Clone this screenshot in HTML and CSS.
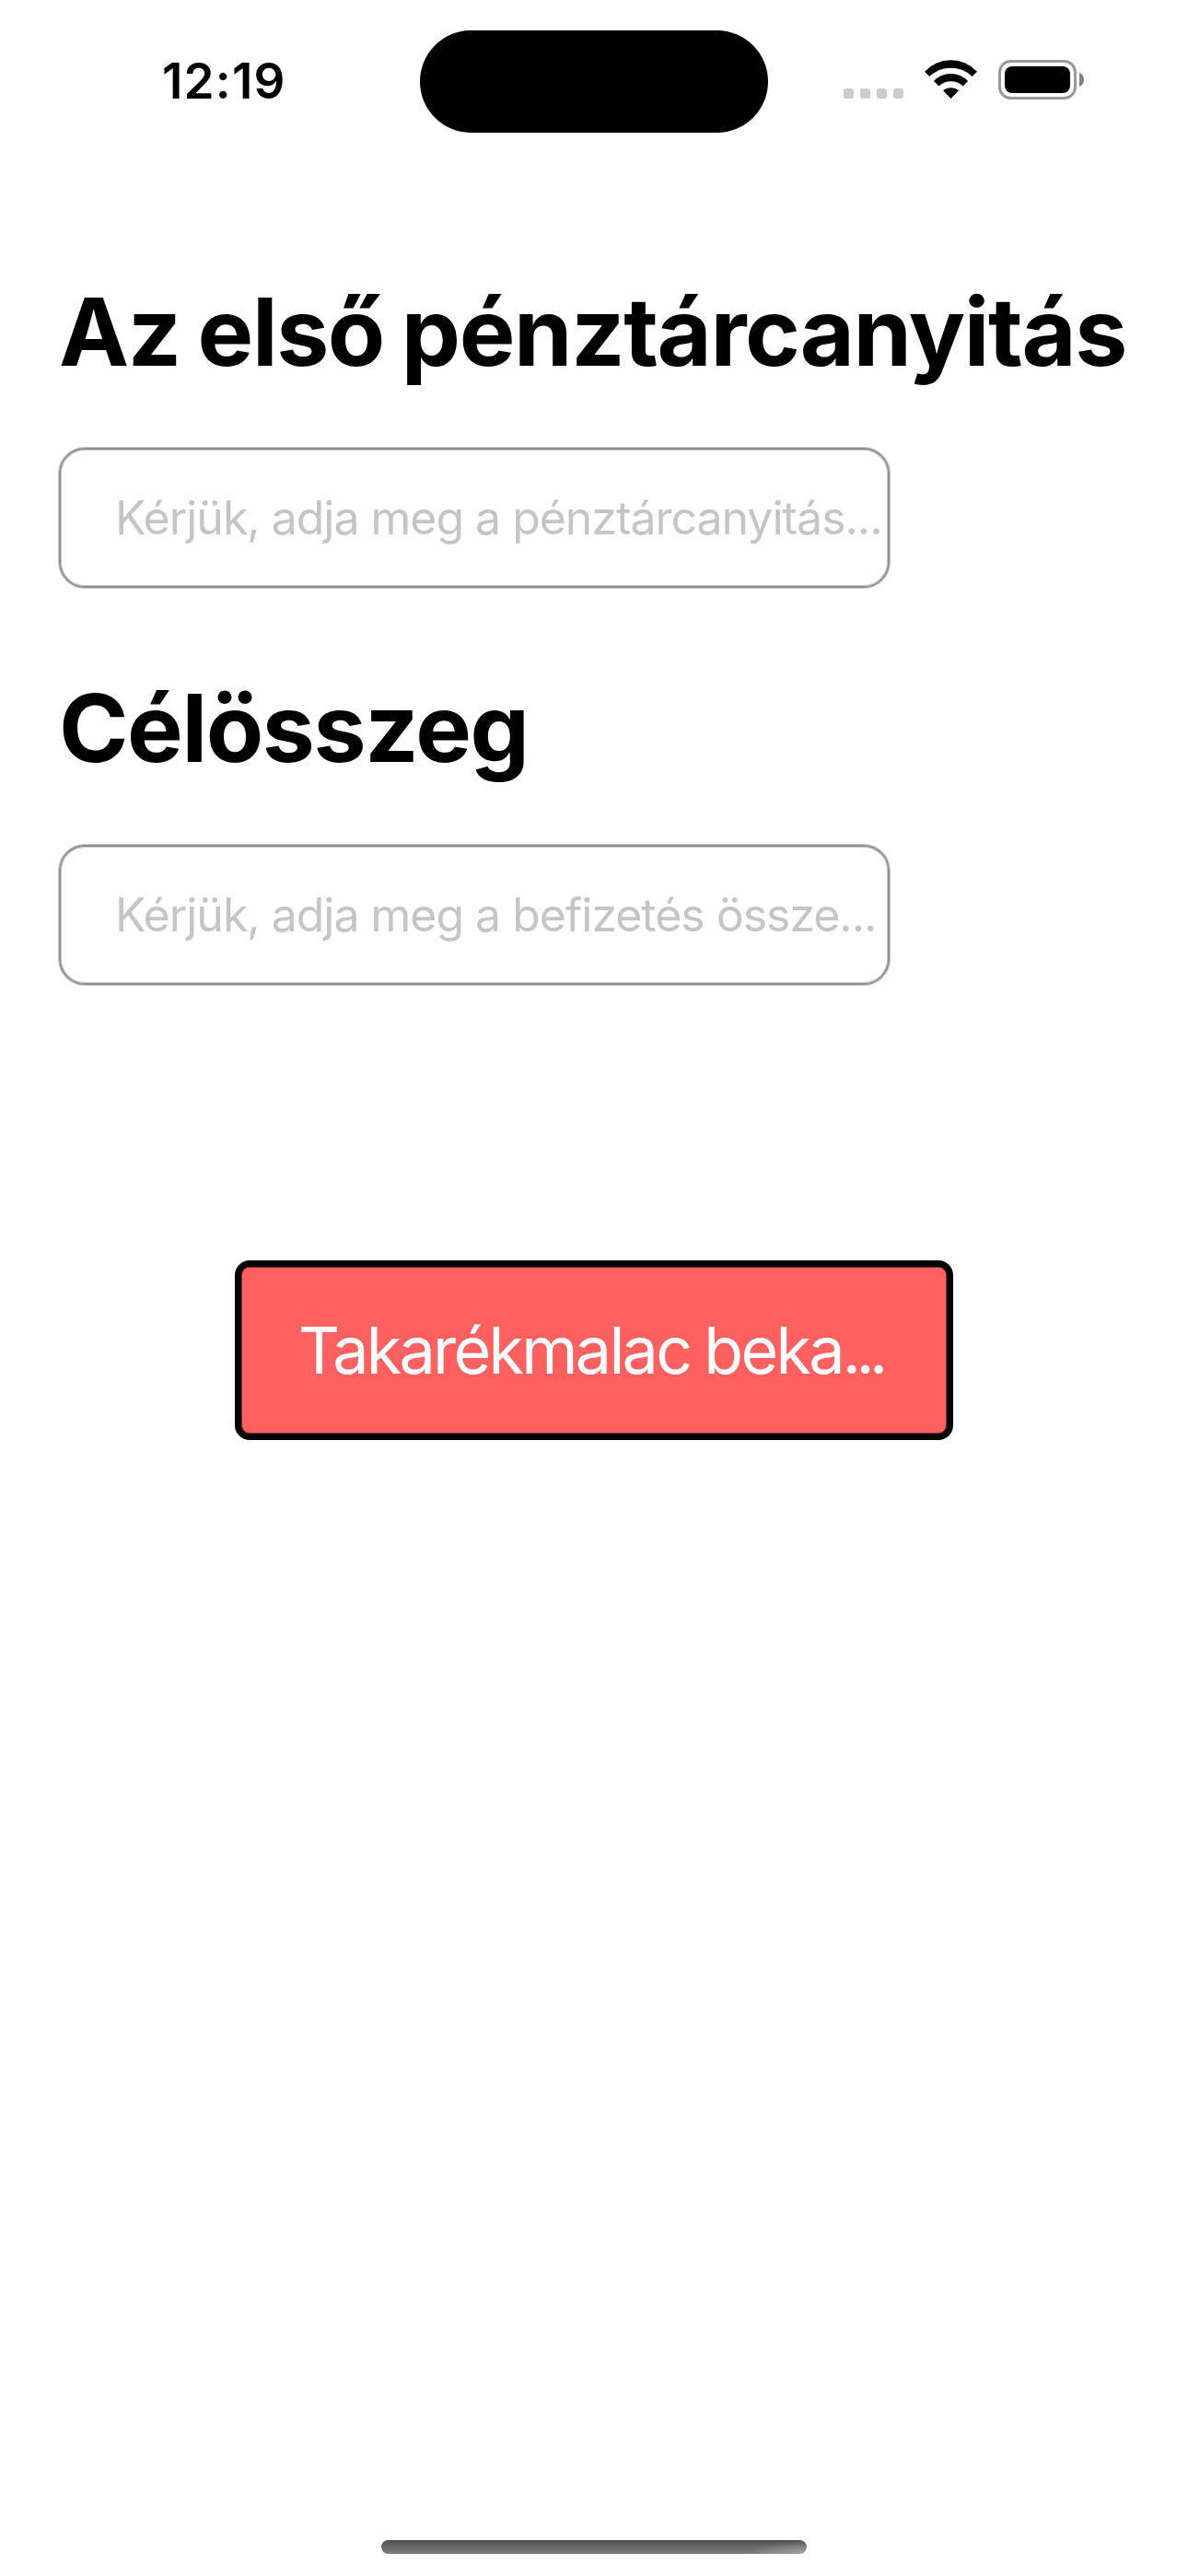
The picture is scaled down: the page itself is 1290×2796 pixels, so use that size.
FILE: index.html
```html
<!DOCTYPE html>
<html lang="hu">
<head>
<meta charset="utf-8">
<title>Takarékmalac</title>
<link rel="stylesheet" href="styles.css">
</head>
<body>
<div class="screen">
  <header class="status">
    <div class="side side-left"><span class="time">12:19</span></div>
    <div class="island"></div>
    <div class="side side-right">
      <svg class="dots" width="65" height="11" viewBox="0 0 65 11" fill="#ccc"><rect width="11" height="11" rx="3"/><rect x="18" width="11" height="11" rx="3"/><rect x="36" width="11" height="11" rx="3"/><rect x="54" width="11" height="11" rx="3"/></svg>
      <svg class="wifi" width="57" height="43" viewBox="0 0 57 43"><path d="M0 12.7A39 39 0 0 1 57 12.7L51.7 18A33.6 33.6 0 0 0 5.3 18ZM10 22.9A25.5 25.5 0 0 1 47 22.9L41.7 28.4A19.5 19.5 0 0 0 15.3 28.4ZM20 33.3A13 13 0 0 1 37 33.3L28.5 42Z"/></svg>
      <svg class="battery" width="93" height="43" viewBox="0 0 93 43"><rect x="1.5" y="1.5" width="82" height="40" rx="12" fill="none" stroke="#999" stroke-width="3"/><rect x="7" y="7" width="71" height="29" rx="8"/><path d="M88 14C91.5 15.5 93 18 93 21.5S91.5 27.5 88 29Z" fill="#808080"/></svg>
    </div>
  </header>
  <main class="form">
    <section class="field">
      <h1 class="title">Az első pénztárcanyitás</h1>
      <div class="input">Kérjük, adja meg a pénztárcanyitás...</div>
    </section>
    <section class="field">
      <h1 class="title">Célösszeg</h1>
      <div class="input">Kérjük, adja meg a befizetés össze...</div>
    </section>
    <button class="action">Takarékmalac beka<span class="ellipsis">...</span></button>
  </main>
  <footer class="home"><div class="home-bar"></div></footer>
</div>
</body>
</html>
```
FILE: styles.css
```css
* { box-sizing: border-box; }

body {
  margin: 0;
  background: #fff;
  color: #000;
  font-family: Inter, "Liberation Sans", sans-serif;
}

.screen {
  display: flex;
  flex-direction: column;
  width: 1290px;
  height: 2796px;
}

.status {
  display: grid;
  grid-template-columns: 456px 378px 456px;
  height: 177px;
  padding-top: 33px;
  align-items: start;
}

.island {
  height: 111px;
  border-radius: 56px;
  background: #000;
}

.side {
  display: flex;
  height: 111px;
}

.side-left { padding: 24px 0 0 176px; }

.time {
  font-size: 53px;
  line-height: 62px;
  font-weight: 600;
  letter-spacing: 1.2px;
}

.side-right {
  padding: 32px 0 0 82px;
  align-items: flex-start;
}

.dots { margin: 31px 23px 0 0; }

.wifi { margin-right: 23px; }

.form {
  display: flex;
  flex-direction: column;
  flex: 1;
  padding: 121px 64px 0;
}

.field + .field { margin-top: 90px; }

.title {
  margin: 0 0 64px;
  font-size: 102px;
  line-height: 124px;
  font-weight: 700;
  letter-spacing: -1.4px;
  word-spacing: -4px;
  white-space: nowrap;
}

.field + .field .title { margin-bottom: 65px; }

.input {
  display: flex;
  align-items: center;
  width: 902px;
  height: 152px;
  padding-left: 59px;
  border: 2px solid #8e8e93;
  border-radius: 28px;
  box-shadow: 0 0 0 1px #8e8e9380, inset 0 0 0 1px #8e8e9380;
  color: #c5c5c7;
  font-size: 50px;
  letter-spacing: -1.03px;
  white-space: nowrap;
}

.action {
  align-self: center;
  width: 780px;
  height: 195px;
  margin-top: 299px;
  padding: 0 0 0 62px;
  border: 7px solid #000;
  border-radius: 16px;
  box-shadow: inset 0 0 0 1px #80302f;
  background: #ff6060;
  color: #fff;
  font-family: inherit;
  font-size: 70px;
  letter-spacing: -2.75px;
  word-spacing: -2px;
  text-align: left;
  white-space: nowrap;
}

.ellipsis { letter-spacing: -5.5px; }

.home {
  display: flex;
  justify-content: center;
  height: 39px;
}

.home-bar {
  width: 462px;
  height: 15px;
  border-radius: 8px;
  background:
    radial-gradient(60px 14px at 100% 100%, #a0a0a0, transparent),
    linear-gradient(#505050, #808080);
}
```
